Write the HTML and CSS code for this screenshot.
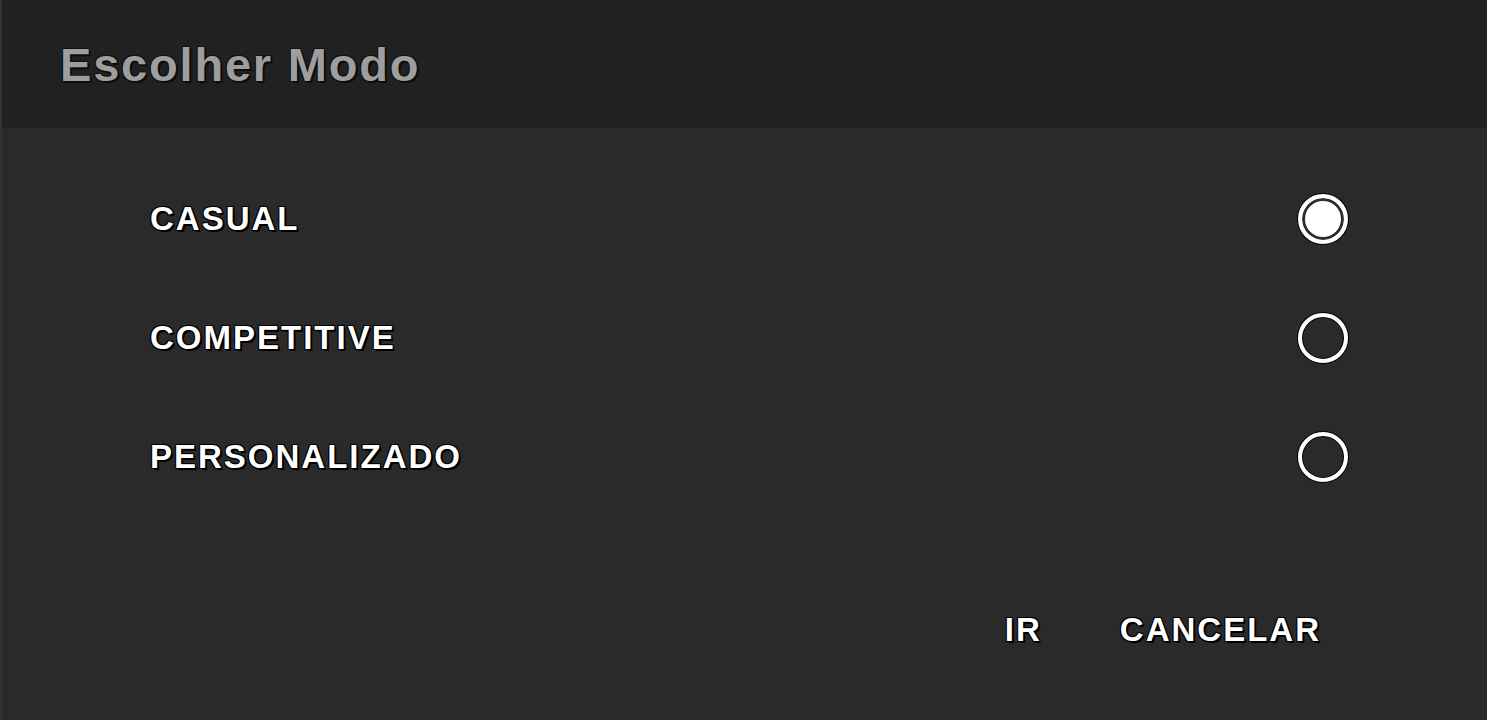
FILE: index.html
```html
<!DOCTYPE html>
<html>
<head>
    <title>Escolher Modo</title>
    <link rel="stylesheet" href="styles.css">
</head>
<body>
    <div class="dialog">
        <div class="dialog-header">
            <div class="dialog-title">Escolher Modo</div>
        </div>
        <div class="mode-list">
            <label class="mode-row">
                <span class="mode-name">CASUAL</span>
                <span class="radio checked"></span>
            </label>
            <label class="mode-row">
                <span class="mode-name">COMPETITIVE</span>
                <span class="radio"></span>
            </label>
            <label class="mode-row">
                <span class="mode-name">PERSONALIZADO</span>
                <span class="radio"></span>
            </label>
        </div>
        <div class="dialog-actions">
            <button class="action">IR</button>
            <button class="action">CANCELAR</button>
        </div>
    </div>
</body>
</html>
```

FILE: styles.css
```css
body {
    margin: 0;
    padding: 0;
    background: #2a2a2a;
    font-family: "Liberation Sans", Arial, sans-serif;
    color: #fff;
    overflow: hidden;
}
.dialog {
    height: 720px;
    display: flex;
    flex-direction: column;
    border-left: 2px solid #333;
    background: #2a2a2a;
}
.dialog-header {
    height: 128px;
    background: #212121;
    display: flex;
    align-items: center;
    padding-left: 58px;
}
.dialog-title {
    font-size: 47px;
    font-weight: bold;
    letter-spacing: 1.8px;
    color: #9e9e9e;
    margin-top: 0;
    text-shadow: 2px 2px 0 #0c0c0c, -1px -1px 0 #111, 1px -1px 0 #111, -1px 1px 0 #111;
}
.mode-list {
    display: flex;
    flex-direction: column;
    padding: 31px 139px 0 148px;
}
.mode-row {
    height: 119px;
    display: flex;
    align-items: center;
    justify-content: space-between;
    cursor: pointer;
}
.mode-name,
.action {
    font-size: 33px;
    font-weight: bold;
    letter-spacing: 2px;
    color: #fff;
    text-shadow: 2px 2px 0 #000, -1px -1px 0 #000, 1px -1px 0 #000, -1px 1px 0 #000;
}
.radio {
    width: 42px;
    height: 42px;
    border: 4px solid #fff;
    border-radius: 50%;
    box-shadow: 0 0 0 1px #000, inset 0 0 0 1px #000;
}
.radio.checked {
    background: #fff;
    box-shadow: 0 0 0 1px #000, inset 0 0 0 3px #2e2e2e;
}
.dialog-actions {
    display: flex;
    justify-content: flex-end;
    gap: 78px;
    padding: 95px 166px 0 0;
}
.action {
    background: none;
    border: none;
    padding: 0;
    font-family: "Liberation Sans", Arial, sans-serif;
    cursor: pointer;
}
```
